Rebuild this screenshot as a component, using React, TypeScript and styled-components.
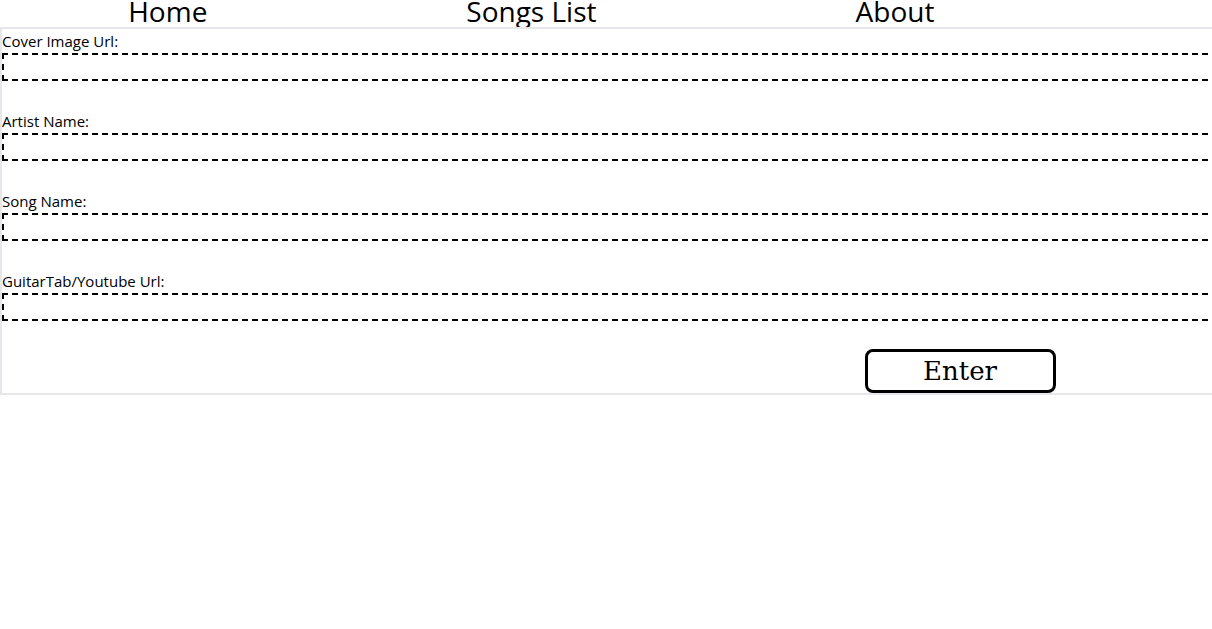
import React from "react";
import styled, { createGlobalStyle } from "styled-components";

const GlobalStyle = createGlobalStyle`
  html, body {
    margin: 0;
    padding: 0;
    overflow: hidden;
    background: #ffffff;
  }
  body {
    font-family: "Open Sans", "Noto Sans", sans-serif;
    color: #000000;
  }
  * { box-sizing: border-box; }
`;

const Page = styled.div`
  display: flex;
  flex-direction: column;
`;

const Nav = styled.nav`
  height: 27px;
  display: flex;
  align-items: flex-start;
`;

const NavList = styled.ul`
  list-style: none;
  margin: 0 0 0 -14px;
  padding: 0;
  display: flex;
`;

const NavItem = styled.li`
  width: 363.6px;
  text-align: center;
`;

const NavLink = styled.a`
  font-family: "Open Sans", "Noto Sans", sans-serif;
  font-size: 28px;
  line-height: 22px;
  color: #000000;
  text-decoration: none;
  display: inline-block;
`;

const Form = styled.form`
  width: 1920px;
  border: 2px solid #e6e6eb;
  display: flex;
  flex-direction: column;
`;

const Field = styled.div`
  display: flex;
  flex-direction: column;
  margin-bottom: 28px;
`;

const Label = styled.label`
  font-family: "Open Sans", "Noto Sans", sans-serif;
  font-size: 15px;
  line-height: 24px;
  height: 24px;
  white-space: nowrap;
`;

const Input = styled.input`
  width: 100%;
  height: 28px;
  border: 2px dashed #000000;
  background: #ffffff;
  outline: none;
  padding: 0 4px;
  font-family: "Open Sans", "Noto Sans", sans-serif;
  font-size: 14px;
`;

const ButtonRow = styled.div`
  display: flex;
  justify-content: center;
`;

const EnterButton = styled.button`
  width: 191px;
  height: 44px;
  border: 3px solid #000000;
  border-radius: 8px;
  background: #ffffff;
  color: #000000;
  font-family: "DejaVu Serif", "Liberation Serif", serif;
  font-size: 26px;
  line-height: 1;
  padding: 0;
  cursor: pointer;
`;

const fields = [
  { id: "cover", label: "Cover Image Url:" },
  { id: "artist", label: "Artist Name:" },
  { id: "song", label: "Song Name:" },
  { id: "tab", label: "GuitarTab/Youtube Url:" },
];

export default function App() {
  return (
    <Page>
      <GlobalStyle />
      <Nav>
        <NavList>
          <NavItem><NavLink href="#">Home</NavLink></NavItem>
          <NavItem><NavLink href="#">Songs List</NavLink></NavItem>
          <NavItem><NavLink href="#">About</NavLink></NavItem>
        </NavList>
      </Nav>
      <Form onSubmit={(e) => e.preventDefault()}>
        {fields.map((f) => (
          <Field key={f.id}>
            <Label htmlFor={f.id}>{f.label}</Label>
            <Input id={f.id} type="text" />
          </Field>
        ))}
        <ButtonRow>
          <EnterButton type="submit">Enter</EnterButton>
        </ButtonRow>
      </Form>
    </Page>
  );
}
